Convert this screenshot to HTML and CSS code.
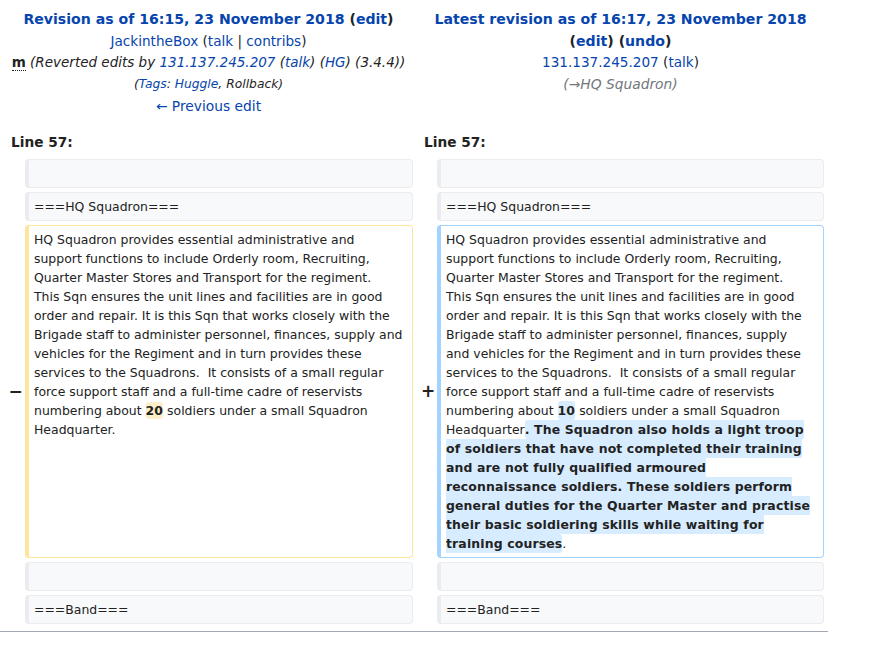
FILE: index.html
```html
<!DOCTYPE html>
<html>
<head>
<meta charset="utf-8">
<link rel="stylesheet" href="styles.css">
</head>
<body>
<div class="diff">
  <div class="title">
    <div class="title-line"><strong><a class="link" href="#">Revision as of 16:15, 23 November 2018</a> (<a class="link" href="#">edit</a>)</strong></div>
    <div class="title-line user"><a class="link" href="#">JackintheBox</a> (<a class="link" href="#">talk</a> | <a class="link" href="#">contribs</a>)</div>
    <div class="title-line summary"><abbr class="minor">m</abbr> <span class="comment">(Reverted edits by <a class="link" href="#">131.137.245.207</a> (<a class="link" href="#">talk</a>) (<a class="link" href="#">HG</a>) (3.4.4))</span></div>
    <div class="title-line tags">(<a class="link" href="#">Tags</a>: <a class="link" href="#">Huggle</a>, Rollback)</div>
    <div class="title-line"><a class="link" href="#">← Previous edit</a></div>
  </div>
  <div class="title">
    <div class="title-line"><strong><a class="link" href="#">Latest revision as of 16:17, 23 November 2018</a> (<a class="link" href="#">edit</a>) (<a class="link" href="#">undo</a>)</strong></div>
    <div class="title-line user"><a class="link" href="#">131.137.245.207</a> (<a class="link" href="#">talk</a>)</div>
    <div class="title-line"><span class="autocomment">(<a class="gray" href="#">→HQ Squadron</a>)</span></div>
  </div>

  <div class="lineno">Line 57:</div>
  <div class="lineno">Line 57:</div>

  <div class="marker"></div>
  <div class="box context"></div>
  <div class="marker"></div>
  <div class="box context"></div>

  <div class="marker"></div>
  <div class="box context">===HQ Squadron===</div>
  <div class="marker"></div>
  <div class="box context">===HQ Squadron===</div>

  <div class="marker">−</div>
  <div class="box deleted">HQ Squadron provides essential administrative and<br>support functions to include Orderly room, Recruiting,<br>Quarter Master Stores and Transport for the regiment.<br>This Sqn ensures the unit lines and facilities are in good<br>order and repair. It is this Sqn that works closely with the<br>Brigade staff to administer personnel, finances, supply and<br>vehicles for the Regiment and in turn provides these<br>services to the Squadrons.&nbsp; It consists of a small regular<br>force support staff and a full-time cadre of reservists<br>numbering about <del class="del">20</del> soldiers under a small Squadron<br>Headquarter.</div>
  <div class="marker">+</div>
  <div class="box added">HQ Squadron provides essential administrative and<br>support functions to include Orderly room, Recruiting,<br>Quarter Master Stores and Transport for the regiment.<br>This Sqn ensures the unit lines and facilities are in good<br>order and repair. It is this Sqn that works closely with the<br>Brigade staff to administer personnel, finances, supply<br>and vehicles for the Regiment and in turn provides these<br>services to the Squadrons.&nbsp; It consists of a small regular<br>force support staff and a full-time cadre of reservists<br>numbering about <ins class="ins">10</ins> soldiers under a small Squadron<br>Headquarter<ins class="ins">. The Squadron also holds a light troop <br>of soldiers that have not completed their training <br>and are not fully qualified armoured <br>reconnaissance soldiers. These soldiers perform <br>general duties for the Quarter Master and practise <br>their basic soldiering skills while waiting for <br>training courses</ins>.</div>

  <div class="marker"></div>
  <div class="box context"></div>
  <div class="marker"></div>
  <div class="box context"></div>

  <div class="marker"></div>
  <div class="box context">===Band===</div>
  <div class="marker"></div>
  <div class="box context">===Band===</div>
</div>
<div class="rule"></div>
</body>
</html>
```
FILE: styles.css
```css
html, body {
  margin: 0;
  padding: 0;
  background: #fff;
}
body {
  font-family: "DejaVu Sans", sans-serif;
  color: #222;
  font-size: 13.8px;
}
.diff {
  width: 820px;
  padding: 4px;
  display: grid;
  grid-template-columns: 17px 388px 16px 387px;
  column-gap: 4px;
  row-gap: 4px;
}
.title {
  grid-column: span 2;
  text-align: center;
  line-height: 21.7px;
  padding-top: 5px;
}
.title strong {
  font-size: 14.1px;
}
.user {
  font-size: 13.6px;
}
.summary {
  font-size: 13.5px;
}
.link {
  color: #0645ad;
  text-decoration: none;
}
.gray {
  color: #72777d;
  text-decoration: none;
}
.minor {
  font-weight: bold;
  text-decoration: none;
  border-bottom: 1px dotted #222;
  cursor: help;
}
.comment {
  font-style: italic;
}
.autocomment {
  font-style: italic;
  color: #72777d;
}
.tags {
  font-style: italic;
  font-size: 12.3px;
}
.lineno {
  grid-column: span 2;
  font-weight: bold;
  font-size: 13.7px;
  padding: 12px 0 5px 7px;
}
.marker {
  font-size: 17px;
  font-weight: bold;
  display: flex;
  align-items: center;
  justify-content: center;
  padding-left: 6px;
}
.box {
  border: 1px solid #eaecf0;
  border-left-width: 4px;
  border-radius: 4px;
  background: #f8f9fa;
  min-height: 19px;
  padding: 4px 5px;
  line-height: 19px;
  font-size: 12.45px;
  color: #222;
  white-space: nowrap;
}
.deleted {
  background: #fff;
  border-color: #ffe49c;
}
.added {
  background: #fff;
  border-color: #a3d3ff;
}
.del {
  text-decoration: none;
  font-weight: bold;
  background: #feeec8;
  border-radius: 3px;
  padding: 1px 0;
  letter-spacing: 0.1px;
}
.ins {
  text-decoration: none;
  font-weight: bold;
  background: #d8ecff;
  border-radius: 3px;
  padding: 2px 0;
  letter-spacing: 0.14px;
}
.rule {
  width: 828px;
  border-top: 1px solid #a2a9b1;
  margin-top: 3px;
}
```
